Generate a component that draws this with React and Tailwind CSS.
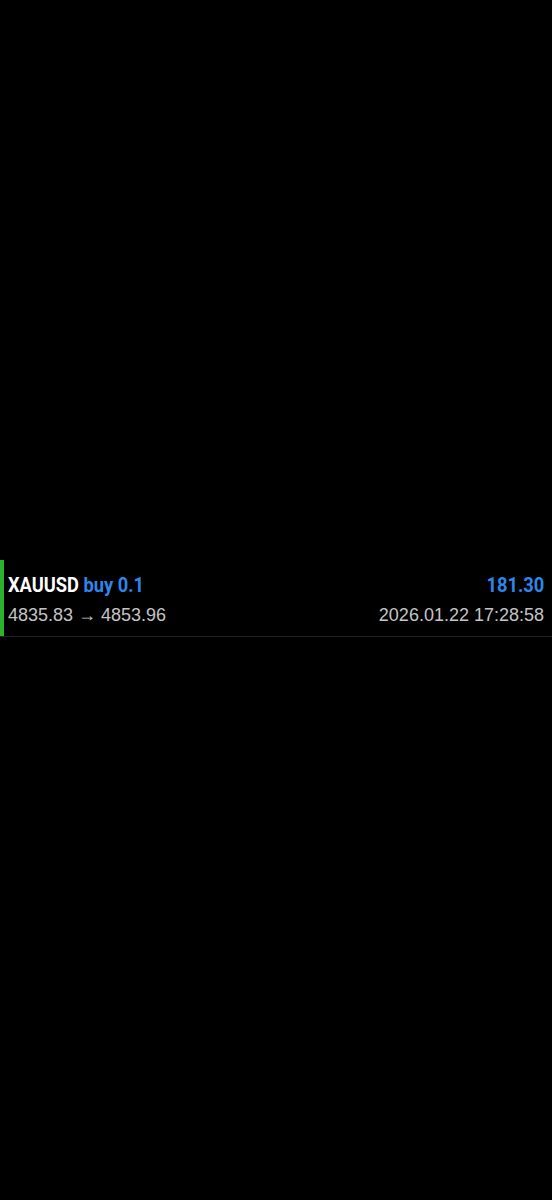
export default function App() {
  const titleFont = { fontFamily: 'Roboto, "Liberation Sans", sans-serif' };
  return (
    <div className="w-full h-[1200px] bg-black pt-[560px]">
      <div className="flex border-b border-[#222222]">
        <div className="w-[4px] bg-[#2bb32f] shrink-0" />
        <div className="flex-1 pl-[4px] pr-[8px] pt-[13px] pb-[9px]">
          <div className="flex justify-between items-baseline h-[24px]">
            <div className="text-[21px] font-bold leading-[24px] origin-left scale-x-[0.87]" style={titleFont}>
              <span className="text-white">XAUUSD</span>
              <span className="text-[#2f86ea]"> buy 0.1</span>
            </div>
            <div className="text-[21px] font-bold leading-[24px] text-[#2f86ea] origin-right scale-x-[0.87]" style={titleFont}>
              181.30
            </div>
          </div>
          <div className="mt-[6px] flex justify-between items-baseline text-[18px] leading-[24px] text-[#c4c4c4] font-['Liberation_Sans',sans-serif]">
            <span>4835.83 → 4853.96</span>
            <span>2026.01.22 17:28:58</span>
          </div>
        </div>
      </div>
    </div>
  );
}
